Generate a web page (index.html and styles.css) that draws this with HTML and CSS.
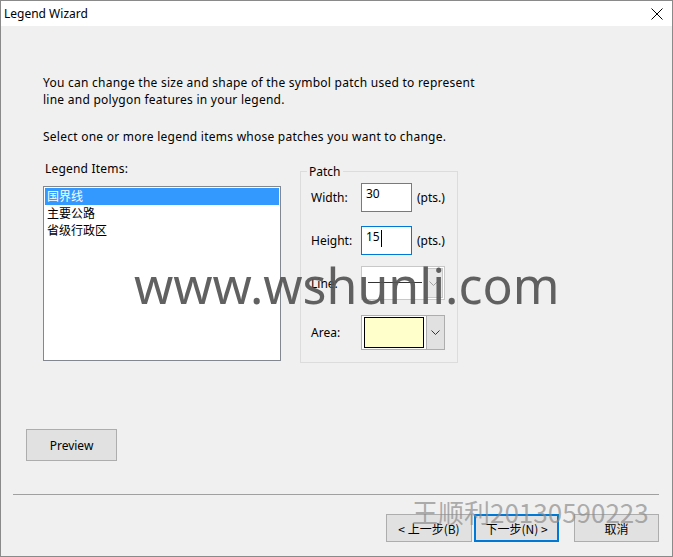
FILE: index.html
```html
<!DOCTYPE html>
<html lang="en">
<head>
  <meta charset="UTF-8">
  <meta name="viewport" content="width=device-width, initial-scale=1.0">
  <title>Legend Wizard</title>
  <link rel="stylesheet" href="styles.css">
</head>
<body>

<div class="window">
  <!-- Title bar -->
  <div class="titlebar">
    <span class="title">Legend Wizard</span>
    <svg class="close" width="12" height="12" viewBox="0 0 12 12">
      <path d="M0.5 0.5 L11.5 11.5 M11.5 0.5 L0.5 11.5" stroke="#000" stroke-width="1" fill="none"/>
    </svg>
  </div>

  <div class="content">
    <p class="intro">You can change the size and shape of the symbol patch used to represent<br>line and polygon features in your legend.</p>
    <p class="intro second">Select one or more legend items whose patches you want to change.</p>

    <div class="main">
      <div class="items">
        <div class="items-label">Legend Items:</div>
        <div class="listbox">
          <div class="list-row selected">国界线</div>
          <div class="list-row">主要公路</div>
          <div class="list-row">省级行政区</div>
        </div>
      </div>

      <fieldset class="patch">
        <legend>Patch</legend>
        <div class="patch-row first">
          <span class="patch-label">Width:</span>
          <div class="textbox">30</div>
          <span class="unit">(pts.)</span>
        </div>
        <div class="patch-row">
          <span class="patch-label">Height:</span>
          <div class="textbox focused">15<span class="caret"></span></div>
          <span class="unit">(pts.)</span>
        </div>
        <div class="patch-row">
          <span class="patch-label">Line:</span>
          <div class="combo line-combo">
            <div class="combo-field"><span class="line-sample"></span></div>
            <div class="combo-btn light">
              <svg width="9" height="5" viewBox="0 0 9 5"><path d="M0.5 0.5 L4.5 4.5 L8.5 0.5" stroke="#a0a0a0" fill="none"/></svg>
            </div>
          </div>
        </div>
        <div class="patch-row">
          <span class="patch-label">Area:</span>
          <div class="combo area-combo">
            <div class="combo-field"><span class="swatch"></span></div>
            <div class="combo-btn">
              <svg width="9" height="5" viewBox="0 0 9 5"><path d="M0.5 0.5 L4.5 4.5 L8.5 0.5" stroke="#333" fill="none"/></svg>
            </div>
          </div>
        </div>
      </fieldset>
    </div>

    <button class="btn preview">Preview</button>

    <div class="separator"></div>

    <div class="actions">
      <button class="btn wizard">&lt; 上一步(B)</button>
      <button class="btn wizard default">下一步(N) &gt;</button>
      <button class="btn wizard cancel">取消</button>
    </div>
  </div>

  <!-- watermarks -->
  <div class="watermark site">www.wshunli.com</div>
  <div class="watermark name">王顺利20130590223</div>
</div>

</body>
</html>
```

FILE: styles.css
```css
body {
  margin: 0;
  padding: 0;
  font-family: "Noto Sans", "Noto Sans CJK SC", sans-serif;
  font-size: 12px;
  color: #000;
}

.window {
  position: relative;
  width: 673px;
  height: 557px;
  box-sizing: border-box;
  border: 1px solid #8a8a8a;
  background-color: #f0f0f0;
  display: flex;
  flex-direction: column;
  overflow: hidden;
}

.titlebar {
  height: 25px;
  background-color: #fff;
  display: flex;
  align-items: center;
  justify-content: space-between;
  padding: 0 9px 0 3px;
}

.title {
  font-size: 12px;
  line-height: 17px;
}

.content {
  flex: 1;
  display: flex;
  flex-direction: column;
  padding: 48px 13px 0 12px;
}

.intro {
  margin: 0 0 0 30px;
  line-height: 17px;
  letter-spacing: 0.25px;
}

.intro.second {
  margin-top: 20px;
}

.main {
  display: flex;
  align-items: flex-start;
  margin-top: 18px;
}

.items {
  margin: -3px 0 0 30px;
}

.items-label {
  line-height: 17px;
  padding-left: 2px;
  margin-bottom: 9px;
  letter-spacing: 0.2px;
}

.listbox {
  width: 238px;
  height: 175px;
  box-sizing: border-box;
  border: 1px solid #828790;
  background-color: #fff;
  padding: 1px;
}

.list-row {
  line-height: 16px;
  height: 17px;
  padding-left: 2px;
  font-family: "Noto Sans CJK SC", sans-serif;
}

.list-row.selected {
  background-color: #3399ff;
  color: #fff;
}

.patch {
  margin: 0 0 0 19px;
  width: 158px;
  height: 200px;
  box-sizing: border-box;
  border: 1px solid #dcdcdc;
  padding: 4px 0 0 10px;
}

.patch legend {
  padding: 0 2px;
  margin-left: -4px;
  line-height: 17px;
}

.patch-row {
  display: flex;
  align-items: center;
  margin-top: 14px;
}

.patch-row.first {
  margin-top: -1px;
}

.patch-row:nth-child(4) {
  margin-top: 11px;
}

.patch-row:nth-child(5) {
  margin-top: 15px;
}

.patch-label {
  width: 50px;
}

.textbox {
  width: 51px;
  height: 29px;
  box-sizing: border-box;
  border: 1px solid #7a7a7a;
  background-color: #fff;
  padding: 1px 4px;
  line-height: 17px;
  display: flex;
  align-items: flex-start;
}

.textbox.focused {
  border-color: #0078d7;
}

.caret {
  display: inline-block;
  width: 1px;
  height: 17px;
  background-color: #000;
  margin-left: 1px;
  margin-top: 2px;
}

.unit {
  margin-left: 5px;
}

.combo {
  width: 84px;
  box-sizing: border-box;
  border: 1px solid #adadad;
  display: flex;
  background-color: #fff;
}

.line-combo {
  height: 34px;
  border-color: #c8c8c8;
}

.area-combo {
  height: 35px;
}

.combo-field {
  flex: 1;
  display: flex;
  align-items: center;
  padding: 0 2px;
}

.line-sample {
  display: block;
  width: 54px;
  height: 1px;
  background-color: #333;
  margin: 0 0 0 4px;
  position: relative;
  top: -1px;
}

.swatch {
  display: block;
  width: 60px;
  height: 31px;
  box-sizing: border-box;
  border: 1px solid #000;
  background-color: #ffffcc;
}

.combo-btn {
  width: 17px;
  background-color: #e1e1e1;
  border-left: 1px solid #adadad;
  display: flex;
  align-items: center;
  justify-content: center;
}

.combo-btn.light {
  background-color: #e8e8e8;
  border: 1px solid #c8c8c8;
  margin: 1px 1px 1px 0;
}

.btn {
  font-family: "Noto Sans", "Noto Sans CJK SC", sans-serif;
  font-size: 12px;
  color: #000;
  background-color: #e1e1e1;
  border: 1px solid #adadad;
  padding: 0;
  cursor: pointer;
}

.preview {
  width: 91px;
  height: 32px;
  margin: 66px 0 0 13px;
}

.separator {
  height: 1px;
  background-color: #a0a0a0;
  margin: 33px 0 0 0;
}

.actions {
  display: flex;
  justify-content: flex-end;
  margin-top: 19px;
}

.wizard {
  width: 86px;
  height: 28px;
  font-family: "Noto Sans CJK SC", sans-serif;
}

.wizard.default {
  width: 85px;
  margin-left: 2px;
  border: 2px solid #0078d7;
}

.wizard.cancel {
  width: 85px;
  margin-left: 15px;
}

.watermark {
  position: absolute;
  white-space: nowrap;
  pointer-events: none;
}

.watermark.site {
  left: 133px;
  top: 250px;
  font-size: 50px;
  color: rgba(85, 85, 85, 0.93);
  line-height: 68px;
}

.watermark.name {
  left: 411px;
  top: 494px;
  font-size: 26px;
  color: rgba(140, 140, 140, 0.7);
  font-family: "Noto Sans CJK SC", sans-serif;
  line-height: 34px;
}
```
